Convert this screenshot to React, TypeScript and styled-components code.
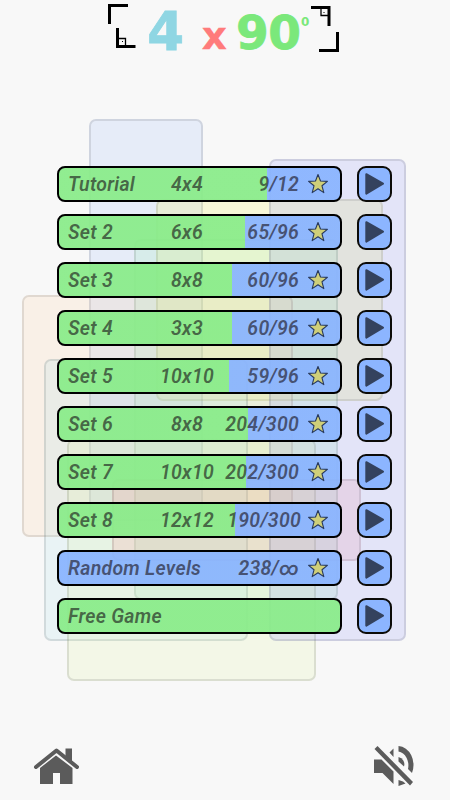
import React from "react";
import styled, { createGlobalStyle } from "styled-components";

const GlobalStyle = createGlobalStyle`
  * { box-sizing: border-box; }
  html, body { margin: 0; padding: 0; background: #f8f8f8; }
`;

const Screen = styled.main`
  position: relative;
  isolation: isolate;
  display: flex;
  flex-direction: column;
  width: 450px;
  height: 800px;
  overflow: hidden;
  background: #f8f8f8;
  font-family: Roboto, "Liberation Sans", sans-serif;
`;

const Tile = styled.div<{ $x: number; $y: number; $w: number; $h: number; $color: string }>`
  position: absolute;
  z-index: -1;
  left: ${(p) => p.$x}px;
  top: ${(p) => p.$y}px;
  width: ${(p) => p.$w}px;
  height: ${(p) => p.$h}px;
  border: 2px solid rgba(0, 0, 0, 0.1);
  border-radius: 7px;
  background: ${(p) => p.$color};
`;

const Header = styled.header`
  display: flex;
  height: 166px;
`;

const Logo = styled.svg`
  display: block;
  width: 450px;
  height: 66px;
  font-family: "DejaVu Sans", sans-serif;
  font-weight: 700;
`;

const LevelList = styled.ul`
  display: flex;
  flex-direction: column;
  gap: 12px;
  margin: 0;
  padding: 0 58px 0 57px;
  list-style: none;
`;

const LevelRow = styled.li`
  display: flex;
  justify-content: space-between;
  height: 36px;
`;

const LevelBar = styled.div<{ $fill: number }>`
  display: grid;
  grid-template-columns: 1fr 80px 72px 41px;
  align-items: center;
  width: 285px;
  border: 2px solid #000;
  border-radius: 8px;
  padding-left: 9px;
  background: linear-gradient(
    to right,
    rgba(137, 236, 137, 0.93) ${(p) => p.$fill}px,
    rgba(137, 180, 255, 0.93) ${(p) => p.$fill}px
  );
  color: rgba(22, 14, 22, 0.62);
  font-size: 19.5px;
  font-style: italic;
  font-weight: 600;
  line-height: 24px;
  letter-spacing: 0.25px;
  white-space: nowrap;
`;

const LevelName = styled.span<{ $wide: boolean }>`
  grid-column: ${(p) => (p.$wide ? "1 / 3" : "1")};
  padding-top: 2px;
`;

const GridSize = styled.span`
  padding-top: 2px;
  text-align: center;
`;

const Score = styled.span<{ $shift: number }>`
  grid-column: 3;
  display: flex;
  justify-content: flex-end;
  padding-top: 1px;
  margin-right: ${(p) => p.$shift}px;
`;

const StarIcon = styled.svg`
  display: block;
  width: 22px;
  height: 22px;
  margin-left: 8px;
`;

const PlayButton = styled.button`
  display: flex;
  width: 35px;
  height: 36px;
  padding: 0;
  border: 2px solid #0c0b08;
  border-radius: 9px;
  background: #8cb5ff;
`;

const PlayIcon = styled.svg`
  display: block;
  width: 31px;
  height: 32px;
`;

const Footer = styled.footer`
  display: flex;
  justify-content: space-between;
  margin-top: auto;
  padding: 0 34px 12px 33px;
`;

const IconButton = styled.button`
  display: flex;
  padding: 0;
  border: 0;
  background: none;
`;

const FooterIcon = styled.svg`
  display: block;
  width: 46px;
  height: 44px;
`;

const tiles = [
  { x: 89, y: 119, w: 114, h: 402, color: "rgba(150,184,250,0.18)" },
  { x: 156, y: 199, w: 227, h: 202, color: "rgba(243,243,70,0.18)" },
  { x: 134, y: 239, w: 204, h: 361, color: "rgba(150,240,170,0.18)" },
  { x: 22, y: 295, w: 271, h: 242, color: "rgba(253,203,153,0.18)" },
  { x: 44, y: 359, w: 204, h: 282, color: "rgba(165,220,232,0.18)" },
  { x: 67, y: 439, w: 249, h: 242, color: "rgba(220,242,153,0.18)" },
  { x: 112, y: 479, w: 249, h: 82, color: "rgba(255,140,143,0.18)" },
  { x: 269, y: 159, w: 137, h: 482, color: "rgba(131,137,248,0.18)" },
];

type LevelInfo = { name: string; size?: string; score?: string; fill: number; shift?: number };

const levels: LevelInfo[] = [
  { name: "Tutorial", size: "4x4", score: "9/12", fill: 208 },
  { name: "Set 2", size: "6x6", score: "65/96", fill: 186 },
  { name: "Set 3", size: "8x8", score: "60/96", fill: 173 },
  { name: "Set 4", size: "3x3", score: "60/96", fill: 173 },
  { name: "Set 5", size: "10x10", score: "59/96", fill: 170 },
  { name: "Set 6", size: "8x8", score: "204/300", fill: 189 },
  { name: "Set 7", size: "10x10", score: "202/300", fill: 187 },
  { name: "Set 8", size: "12x12", score: "190/300", fill: 176, shift: -2 },
  { name: "Random Levels", score: "238/∞", fill: 0 },
  { name: "Free Game", fill: 281 },
];

const Star = () => (
  <StarIcon viewBox="0 0 22 22">
    <path
      d="M11 1.5 13.5 8 20.4 8.4 15 12.8 16.8 19.6 11 15.8 5.2 19.6 7 12.8 1.6 8.4 8.5 8Z"
      fill="#cfcf79"
      stroke="#27385c"
      strokeWidth="1.1"
      strokeLinejoin="round"
    />
  </StarIcon>
);

const Level = ({ name, size, score, fill, shift = 0 }: LevelInfo) => (
  <LevelRow>
    <LevelBar $fill={fill}>
      <LevelName $wide={!size}>{name}</LevelName>
      {size && <GridSize>{size}</GridSize>}
      {score && <Score $shift={shift}>{score}</Score>}
      {score && <Star />}
    </LevelBar>
    <PlayButton aria-label={`Play ${name}`}>
      <PlayIcon viewBox="0 0 31 32">
        <path d="M7.3 6.2 24 15.7 7.3 25.6Z" fill="#34425e" stroke="#34425e" strokeWidth="2" strokeLinejoin="round" />
      </PlayIcon>
    </PlayButton>
  </LevelRow>
);

export default function App() {
  return (
    <>
      <GlobalStyle />
      <Screen>
        {tiles.map((t) => (
          <Tile key={`${t.x}-${t.y}`} $x={t.x} $y={t.y} $w={t.w} $h={t.h} $color={t.color} />
        ))}
        <Header>
          <Logo viewBox="0 0 450 66">
            <g fill="none" stroke="#000" strokeWidth="3">
              <path d="M109.500 24V5.500H128M117.500 28V46.500H135.500M311 7.500H329V26M337.500 32V50.500H319" />
              <path d="M119 38.500H125.500V45M321 9V15.500H328" strokeWidth="1.300" />
            </g>
            <path d="M122 41h1v1h-1zM323.500 12h1v1h-1z" />
            <text x="147.300" y="50" fontSize="53" fill="#8fd6e3" stroke="#8fd6e3" strokeWidth="0.800">4</text>
            <text x="201.700" y="49" fontSize="39" fill="#ff7b7b" stroke="#ff7b7b" strokeWidth="0.300">x</text>
            <text x="236" y="48.500" fontSize="47" textLength="65" fill="#7be87b" stroke="#7be87b" strokeWidth="0.800">90</text>
            <text x="301" y="25.500" fontSize="12" fill="#7be87b">0</text>
          </Logo>
        </Header>
        <LevelList>
          {levels.map((level) => (
            <Level key={level.name} {...level} />
          ))}
        </LevelList>
        <Footer>
          <IconButton aria-label="Home">
            <FooterIcon viewBox="33 744 46 44">
              <path d="M65.500 748.500H72V762L65.500 756.500ZM40 768 56 755.500 72.500 768V784H60V773H53V784H40Z" fill="#5b5b5b" />
              <path d="M36 767 56.500 750.500 77 767" fill="none" stroke="#5b5b5b" strokeWidth="4" strokeLinecap="round" strokeLinejoin="round" />
            </FooterIcon>
          </IconButton>
          <IconButton aria-label="Sound off">
            <FooterIcon viewBox="370 744 46 44">
              <g fill="#5b5b5b">
                <path d="M374 759.500H381.500L393.500 771.500V784L382.500 773H374ZM389.500 752.500 393.500 748.500V757Z" />
                <path d="M398.500 757A7.500 7.500 0 0 1 404 766.500L398.500 761.500Z" />
                <path d="M398.500 746A16 19 0 0 1 412 773L408 769A11.500 14 0 0 0 398.500 751.500ZM398.500 780 403 781.500 405.500 783.500 398.500 786Z" />
                <path d="M374.500 749 377.500 746 413 782 410 785.500Z" />
              </g>
            </FooterIcon>
          </IconButton>
        </Footer>
      </Screen>
    </>
  );
}
